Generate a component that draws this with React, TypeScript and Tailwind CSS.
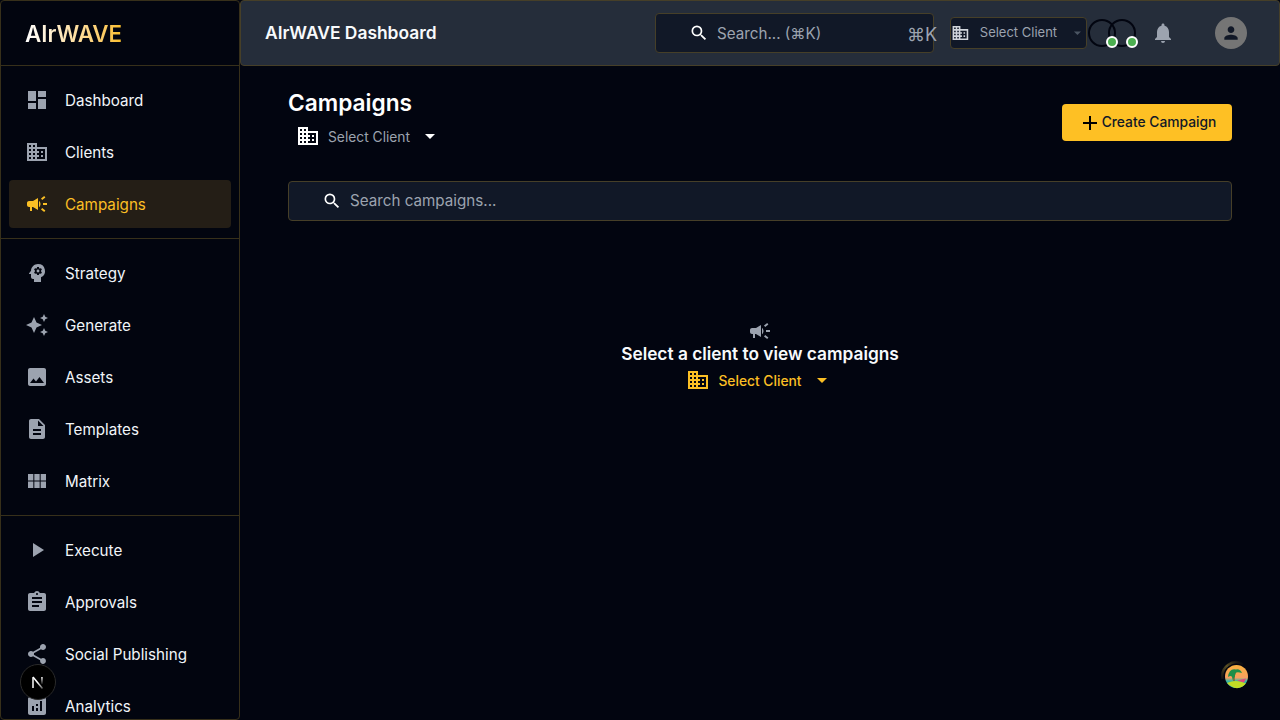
import React from 'react';
import {
  MdDashboard,
  MdBusiness,
  MdCampaign,
  MdPsychology,
  MdAutoAwesome,
  MdImage,
  MdDescription,
  MdViewModule,
  MdPlayArrow,
  MdAssignment,
  MdShare,
  MdAnalytics,
  MdSearch,
  MdNotifications,
  MdPerson,
  MdArrowDropDown,
  MdAdd,
} from 'react-icons/md';

const groups = [
  [
    { label: 'Dashboard', icon: MdDashboard },
    { label: 'Clients', icon: MdBusiness },
    { label: 'Campaigns', icon: MdCampaign, active: true },
  ],
  [
    { label: 'Strategy', icon: MdPsychology },
    { label: 'Generate', icon: MdAutoAwesome },
    { label: 'Assets', icon: MdImage },
    { label: 'Templates', icon: MdDescription },
    { label: 'Matrix', icon: MdViewModule },
  ],
  [
    { label: 'Execute', icon: MdPlayArrow },
    { label: 'Approvals', icon: MdAssignment },
    { label: 'Social Publishing', icon: MdShare },
    { label: 'Analytics', icon: MdAnalytics },
  ],
];

function Sidebar() {
  return (
    <aside className="w-[240px] h-[720px] shrink-0 overflow-hidden rounded-[4px] border border-[#37301a] bg-[#02050f]">
      <div className="h-[65px] flex items-center pl-6 pt-[2px] border-b border-[#37301a]">
        <span className="text-[22.4px] leading-8 font-semibold bg-gradient-to-r from-white to-[#fbbf24] bg-clip-text text-transparent">
          AIrWAVE
        </span>
      </div>
      {groups.map((group, i) => (
        <div
          key={i}
          className={
            i < 2 ? 'py-[6px] border-b border-[#37301a] px-2' : 'pt-[6px] px-2'
          }
        >
          {group.map((item) => {
            const Icon = item.icon;
            return (
              <div
                key={item.label}
                className={
                  item.active
                    ? 'h-12 my-1 flex items-center rounded-[4px] bg-[#241e16] text-[#fbbf24]'
                    : 'h-12 my-1 flex items-center rounded-[4px] text-[#f1f5f9]'
                }
              >
                <span
                  className={
                    item.active
                      ? 'w-14 pl-4 shrink-0 text-[#fbbf24]'
                      : 'w-14 pl-4 shrink-0 text-[#9ca3af]'
                  }
                >
                  <Icon size={24} />
                </span>
                <span className="pt-[2px] text-[15.2px] leading-6">{item.label}</span>
              </div>
            );
          })}
        </div>
      ))}
    </aside>
  );
}

function Header() {
  return (
    <header className="h-[66px] shrink-0 flex items-center rounded-[4px] border border-[#463f28] bg-[#252d3a] pl-6 pr-8">
      <h1 className="flex-1 text-[17.4px] leading-7 font-semibold text-[#f8fafc]">AIrWAVE Dashboard</h1>
      <div className="relative w-[279px] h-10 mr-4 flex items-center rounded-[4px] border border-[#463f28] bg-[#111827] pl-[33px]">
        <MdSearch size={20} className="text-white" />
        <span className="ml-2 pt-[2px] text-[15.2px] text-[#9ca3af]">Search... (⌘K)</span>
        <span className="absolute left-[251px] top-[9px] text-[18px] leading-6 text-[#9ca3af]">⌘K</span>
      </div>
      <div className="w-[137px] h-8 flex items-center rounded-[4px] border border-[#463f28] bg-[#111827]">
        <MdBusiness size={20} className="text-[#d1d5db]" />
        <span className="ml-[10px] text-[13px] whitespace-nowrap text-[#9ca3af]">Select Client</span>
        <MdArrowDropDown size={18} className="ml-[12px] text-[#4b5563]" />
      </div>
      <div className="relative w-[48px] h-7 ml-[1px]">
        <span className="absolute left-0 top-0 w-7 h-7 rounded-full border-2 border-[#020510]" />
        <span className="absolute left-5 top-0 w-7 h-7 rounded-full border-2 border-[#020510]" />
        <span className="absolute left-[18px] top-[17px] w-3 h-3 rounded-full border-2 border-white bg-[#4caf50]" />
        <span className="absolute left-[38px] top-[17px] w-3 h-3 rounded-full border-2 border-white bg-[#4caf50]" />
      </div>
      <MdNotifications size={24} className="ml-[15px] text-[#9ca3af]" />
      <div className="ml-10 w-8 h-8 rounded-full bg-[#757575] flex items-center justify-center text-[#111827]">
        <MdPerson size={20} />
      </div>
    </header>
  );
}

function Island() {
  return (
    <svg width="32" height="32" viewBox="0 0 32 32" className="absolute left-[1219px] top-[659px]">
      <defs>
        <linearGradient id="sky" x1="0" y1="0" x2="0" y2="1">
          <stop offset="0" stopColor="#f9b23f" />
          <stop offset="0.55" stopColor="#f8a060" />
          <stop offset="0.7" stopColor="#35b7a6" />
        </linearGradient>
        <linearGradient id="arc" x1="0" y1="1" x2="1" y2="0">
          <stop offset="0" stopColor="#4d4420" stopOpacity="0.2" />
          <stop offset="0.5" stopColor="#5a4f24" />
          <stop offset="1" stopColor="#4d4420" stopOpacity="0" />
        </linearGradient>
      </defs>
      <path d="M3.5 20 A14 14 0 0 1 24 5" fill="none" stroke="url(#arc)" strokeWidth="2.5" />
      <circle cx="17.5" cy="17.5" r="11.5" fill="url(#sky)" />
      <path d="M8 24 Q17 20 27 24.5 Q18 34 8 24Z" fill="#c2dc25" />
      <path d="M15 22 Q14.5 16 17 12" fill="none" stroke="#7a5a22" strokeWidth="1.3" />
      <path d="M9 18 Q10 9 17 10.5 Q21 9.5 23 14 Q18 12.5 16.5 14 Q16.5 18 13.5 21 Q13.5 15 9 18Z" fill="#1f8f48" />
      <path d="M18 21.5 L27 19.5 L25 23.5Z" fill="#e0457b" />
    </svg>
  );
}

export default function App() {
  return (
    <div className="relative w-[1280px] h-[720px] overflow-hidden flex bg-[#020510] font-['Inter',sans-serif]">
      <Sidebar />
      <div className="flex-1 min-w-0 flex flex-col">
        <Header />
        <main className="flex-1 px-12 pt-[22px]">
          <div className="flex items-start justify-between">
            <div>
              <h2 className="text-[22.7px] leading-[30px] font-semibold text-white">Campaigns</h2>
              <div className="mt-[2px] h-8 flex items-center pl-[8px]">
                <MdBusiness size={24} className="text-white" />
                <span className="ml-[8px] pt-[2px] text-[13.8px] text-[#9ca3af]">Select Client</span>
                <MdArrowDropDown size={24} className="ml-2 text-white" />
              </div>
            </div>
            <button className="mt-[16px] w-[170px] h-[37px] flex items-center justify-center rounded-[4px] bg-[#fec024] text-[13.8px] leading-[35px] font-medium text-[#111827]">
              <MdAdd size={24} className="text-black" />
              <span>Create Campaign</span>
            </button>
          </div>
          <div className="mt-[29px] h-10 flex items-center rounded-[4px] border border-[#463f28] bg-[#111827] pl-[33px]">
            <MdSearch size={20} className="text-white" />
            <span className="ml-2 text-[15.2px] text-[#9ca3af]">Search campaigns...</span>
          </div>
          <div className="mt-[98px] flex flex-col items-center">
            <MdCampaign size={24} className="text-[#9ca3af]" />
            <p className="text-[17.3px] leading-[22px] font-semibold text-[#f8fafc]">Select a client to view campaigns</p>
            <div className="-mt-[1px] h-8 flex items-center">
              <MdBusiness size={24} className="text-[#fbbf24]" />
              <span className="ml-2 pt-[2px] text-[13.8px] font-medium text-[#fbbf24]">Select Client</span>
              <MdArrowDropDown size={24} className="ml-2 text-[#fbbf24]" />
            </div>
          </div>
        </main>
      </div>
      <div className="absolute left-5 top-[664px] w-9 h-9 rounded-full bg-black border border-[#2a2a2a] flex items-center justify-center">
        <svg width="16" height="16" viewBox="0 0 16 16" fill="none">
          <defs>
            <linearGradient id="nfade" x1="0" y1="0" x2="1" y2="1">
              <stop offset="0.5" stopColor="white" />
              <stop offset="1" stopColor="white" stopOpacity="0.35" />
            </linearGradient>
            <linearGradient id="nstem" x1="0" y1="0" x2="0" y2="1">
              <stop offset="0" stopColor="white" />
              <stop offset="1" stopColor="white" stopOpacity="0.1" />
            </linearGradient>
          </defs>
          <path d="M3 14V3.2" stroke="white" strokeWidth="1.5" />
          <path d="M3 3 L12.5 14.5" stroke="url(#nfade)" strokeWidth="1.5" />
          <rect x="11.2" y="3" width="1.5" height="7" fill="url(#nstem)" />
        </svg>
      </div>
      <Island />
    </div>
  );
}
